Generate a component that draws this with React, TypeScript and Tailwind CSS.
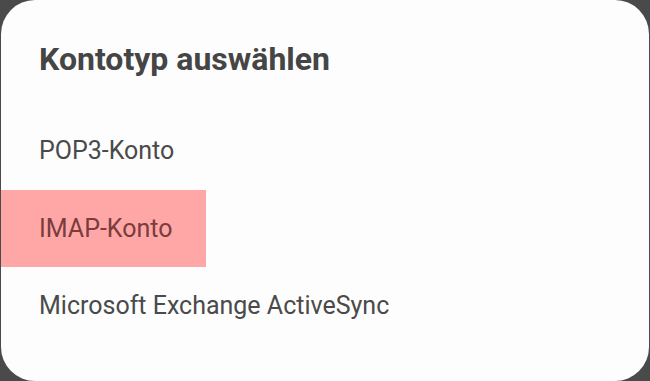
export default function App() {
  const font = { fontFamily: "Roboto, 'Noto Sans', sans-serif" };
  return (
    <div className="h-[381px] w-[650px] bg-[#4a4a4a] px-[1px]" style={font}>
      <div className="flex h-full flex-col rounded-[34px] bg-[#fdfdfd]">
        <div className="flex h-[112px] items-center px-[38px] pt-[6px]">
          <h1 className="text-[32px] font-bold text-[#454545]">Kontotyp auswählen</h1>
        </div>
        <div className="flex h-[78px] items-center px-[38px] text-[25px] text-[#4a4a4a]">
          POP3-Konto
        </div>
        <div className="flex h-[77px]">
          <div className="flex w-[205px] items-center bg-[#ffa7a7] pl-[38px] text-[25px] text-[#7a3c3c]">
            IMAP-Konto
          </div>
        </div>
        <div className="flex h-[77px] items-center px-[38px] text-[25px] text-[#4a4a4a]">
          Microsoft Exchange ActiveSync
        </div>
      </div>
    </div>
  );
}
